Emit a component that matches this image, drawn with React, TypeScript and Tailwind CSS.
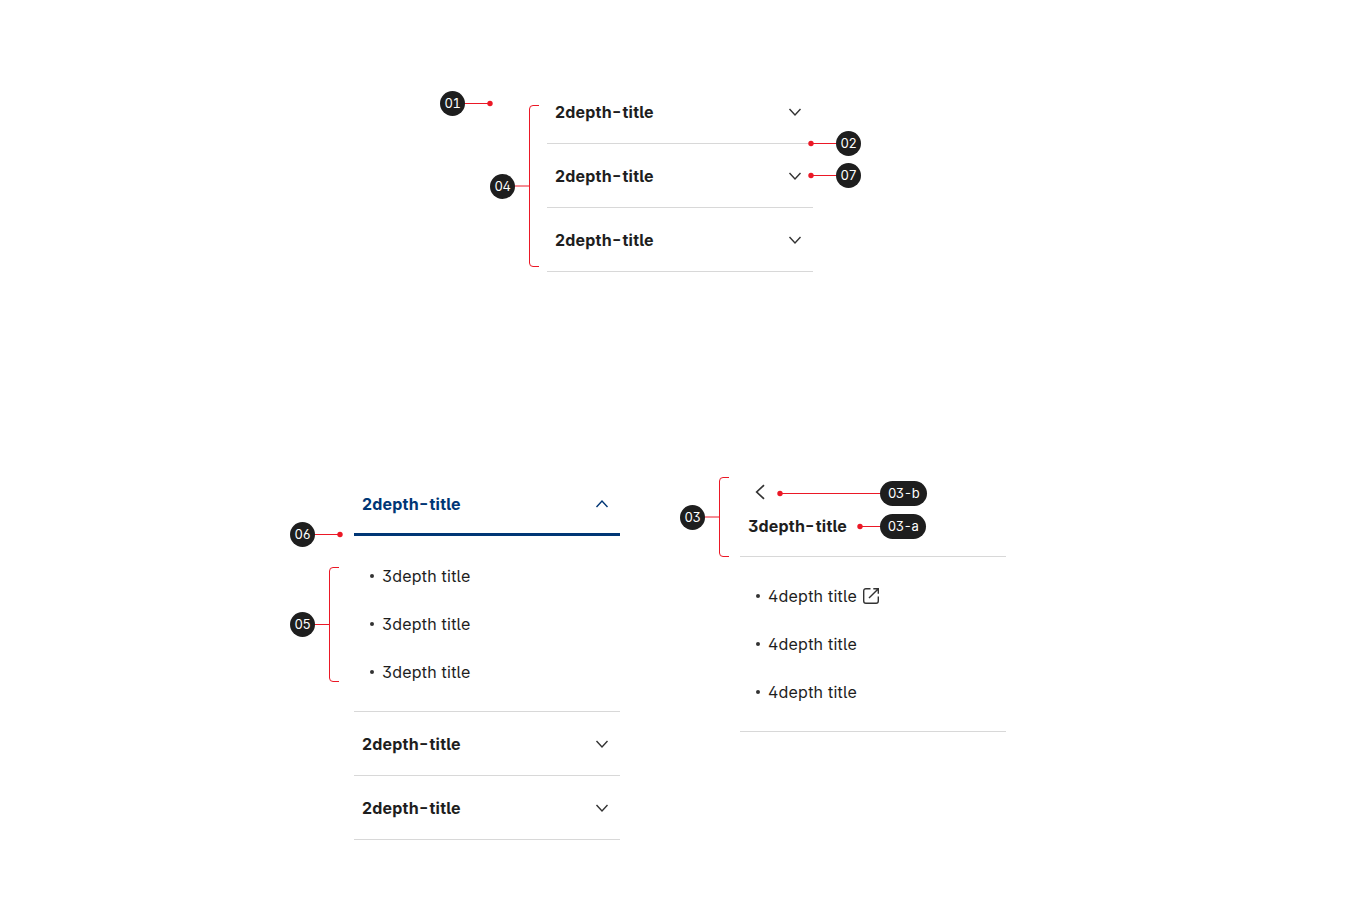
import React from "react";

type ChevronProps = { up?: boolean };

function Chevron({ up = false }: ChevronProps) {
  return (
    <svg
      className={up ? "size-5 shrink-0 text-[#003675]" : "size-5 shrink-0 text-[#333]"}
      viewBox="0 0 20 20"
      fill="none"
      stroke="currentColor"
      strokeWidth="1.4"
    >
      <path d={up ? "M4.5 13 10 7.1l5.500 5.900" : "M4.5 7 10 12.900 15.500 7"} />
    </svg>
  );
}

function Title({ depth }: { depth: string }) {
  return (
    <span className="text-[16px] font-bold leading-6 tracking-[0.2px]">
      {depth}
      <span className="mr-[1px] inline-block origin-left scale-x-[1.25] pr-[2px] [font-feature-settings:'case']">-</span>
      title
    </span>
  );
}

function MenuRow() {
  return (
    <div className="flex h-16 items-center justify-between border-b border-[#d8d8d8] px-2">
      <Title depth="2depth" />
      <Chevron />
    </div>
  );
}

function SubItem({ label, external = false }: { label: string; external?: boolean }) {
  return (
    <li className="flex h-12 items-center">
      <span className="mr-2 size-1 rounded-full bg-[#333]" />
      <span className="text-[16px] leading-6 tracking-[0.22px]">{label}</span>
      {external && (
        <svg className="ml-1 size-5" viewBox="0 0 20 20" fill="none" stroke="#333" strokeWidth="1.400">
          <path d="M9.500 2.700H4.900a2.200 2.200 0 0 0-2.200 2.200v10.200c0 1.200 1 2.200 2.200 2.200h10.200c1.200 0 2.200-1 2.200-2.200v-4.600M12.300 2.700h5v5M17.100 2.900 8 12" />
        </svg>
      )}
    </li>
  );
}

function Badge({ label, place }: { label: string; place: string }) {
  return (
    <span
      className={`absolute flex h-[25px] items-center justify-center rounded-full bg-[#1e1e1e] text-[13px] font-normal leading-none tracking-[-0.5px] text-white [font-feature-settings:'cv02','cv03','cv09','case','tnum'] ${place}`}
    >
      {label}
    </span>
  );
}

function Markers() {
  return (
    <div className="pointer-events-none absolute inset-0">
      <svg className="absolute inset-0 h-[920px] w-[1360px]" fill="none" stroke="#eb1826">
        <path d="M464 103.5h26M811 143.5h26M811 175.5h26M314 534.5h26M780 493.5h101M860 526.5h21M314 624.5h16" />
        <path d="M514 186h16M704 517h16" />
        <path d="M539 105.5h-6q-3.500 0-3.500 3.500v154q0 3.500 3.500 3.500h6" />
        <path d="M339 567.500h-6q-3.500 0-3.500 3.500v107q0 3.500 3.500 3.500h6" />
        <path d="M729 477.500h-6q-3.500 0-3.500 3.500v72q0 3.500 3.500 3.500h6" />
        <g fill="#eb1826" stroke="none">
          <circle cx="490" cy="103.500" r="2.700" />
          <circle cx="811" cy="143.500" r="2.700" />
          <circle cx="811" cy="175.500" r="2.700" />
          <circle cx="340" cy="534.500" r="2.700" />
          <circle cx="780" cy="493.500" r="2.700" />
          <circle cx="860" cy="526.500" r="2.700" />
        </g>
      </svg>
      <Badge label="01" place="left-[440px] top-[91px] w-[25px]" />
      <Badge label="02" place="left-[836px] top-[131px] w-[25px]" />
      <Badge label="07" place="left-[836px] top-[163px] w-[25px]" />
      <Badge label="04" place="left-[490px] top-[173.5px] w-[25px]" />
      <Badge label="06" place="left-[290px] top-[522px] w-[25px]" />
      <Badge label="05" place="left-[290px] top-[612px] w-[25px]" />
      <Badge label="03" place="left-[680px] top-[504.5px] w-[25px]" />
      <Badge label="03-b" place="left-[880px] top-[481px] w-[47px]" />
      <Badge label="03-a" place="left-[880px] top-[514px] w-[46px]" />
    </div>
  );
}

export default function App() {
  return (
    <main className="relative h-[920px] w-[1360px] overflow-hidden bg-white pt-20 font-['Inter',sans-serif] text-[#1e1e1e] [font-feature-settings:'cv02','cv05','cv09']">
      <section className="ml-[547px] w-[266px]">
        <MenuRow />
        <MenuRow />
        <MenuRow />
      </section>

      <div className="mt-[200px] ml-[354px] flex items-start gap-[120px]">
        <section className="w-[266px]">
          <div className="flex h-16 items-center justify-between border-b-[3px] border-[#003675] px-2 pt-[3px] text-[#003675]">
            <Title depth="2depth" />
            <Chevron up />
          </div>
          <ul className="border-b border-[#d8d8d8] px-4 pt-[16px] pb-[15px]">
            <SubItem label="3depth title" />
            <SubItem label="3depth title" />
            <SubItem label="3depth title" />
          </ul>
          <MenuRow />
          <MenuRow />
        </section>

        <section className="w-[266px]">
          <div className="flex h-[85px] flex-col border-b border-[#d8d8d8] px-2 pt-2">
            <svg className="size-6 shrink-0" viewBox="0 0 24 24" fill="none" stroke="#333" strokeWidth="1.700">
              <path d="M16 5.200 8.700 12l7.300 6.800" />
            </svg>
            <div className="mt-[10px] flex">
              <Title depth="3depth" />
            </div>
          </div>
          <ul className="border-b border-[#d8d8d8] px-4 pt-[15px] pb-[15px]">
            <SubItem label="4depth title" external />
            <SubItem label="4depth title" />
            <SubItem label="4depth title" />
          </ul>
        </section>
      </div>
      <Markers />
    </main>
  );
}
